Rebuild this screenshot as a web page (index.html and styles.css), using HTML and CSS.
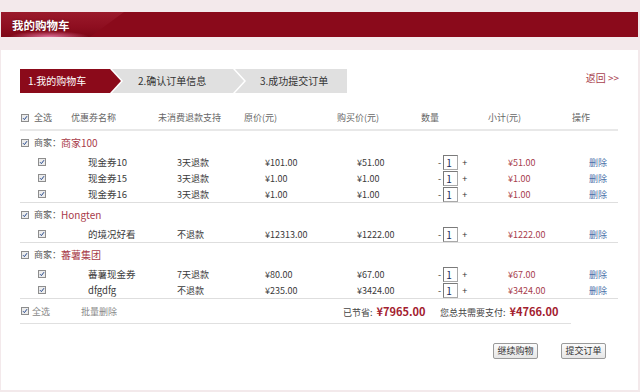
FILE: index.html
```html
<!DOCTYPE html>
<html lang="zh">
<head>
<meta charset="utf-8">
<title>我的购物车</title>
<link rel="stylesheet" href="styles.css">
</head>
<body>
<div class="topbar">
  <div class="tab"><span class="tab-title">我的购物车</span></div>
</div>
<div class="panel">
  <div class="steps-row">
    <div class="steps">
      <div class="step step1">1.我的购物车</div>
      <div class="step step2">2.确认订单信息</div>
      <div class="step step3">3.成功提交订单</div>
    </div>
    <a class="back">返回 &gt;&gt;</a>
  </div>

  <div class="cart">
    <div class="thead">
      <span class="h c-a"><i class="cb"><svg viewBox="0 0 8 8" width="8" height="8"><rect x="0.5" y="0.5" width="7" height="7" fill="#ececec" stroke="#8d8d8d"/><path d="M2 4.2 L3.4 5.6 L6 2.2" fill="none" stroke="#23468c" stroke-width="1"/></svg></i>全选</span>
      <span class="h c-b">优惠券名称</span>
      <span class="h c-c">未消费退款支持</span>
      <span class="h c-d">原价(元)</span>
      <span class="h c-e">购买价(元)</span>
      <span class="h c-f">数量</span>
      <span class="h c-g">小计(元)</span>
      <span class="h c-h">操作</span>
    </div>

    <div class="block">
      <div class="merchant"><i class="cb"><svg viewBox="0 0 8 8" width="8" height="8"><rect x="0.5" y="0.5" width="7" height="7" fill="#ececec" stroke="#8d8d8d"/><path d="M2 4.2 L3.4 5.6 L6 2.2" fill="none" stroke="#23468c" stroke-width="1"/></svg></i><span class="m-label">商家：</span><span class="m-name">商家100</span></div>
      <div class="item">
        <span class="i-a"><i class="cb"><svg viewBox="0 0 8 8" width="8" height="8"><rect x="0.5" y="0.5" width="7" height="7" fill="#ececec" stroke="#8d8d8d"/><path d="M2 4.2 L3.4 5.6 L6 2.2" fill="none" stroke="#23468c" stroke-width="1"/></svg></i></span>
        <span class="i-b">现金券10</span><span class="i-c">3天退款</span><span class="i-d">¥101.00</span><span class="i-e">¥51.00</span>
        <span class="i-f"><span class="pm">-</span><span class="qty">1</span><span class="pm">+</span></span>
        <span class="i-g">¥51.00</span><span class="i-h">删除</span>
      </div>
      <div class="item">
        <span class="i-a"><i class="cb"><svg viewBox="0 0 8 8" width="8" height="8"><rect x="0.5" y="0.5" width="7" height="7" fill="#ececec" stroke="#8d8d8d"/><path d="M2 4.2 L3.4 5.6 L6 2.2" fill="none" stroke="#23468c" stroke-width="1"/></svg></i></span>
        <span class="i-b">现金券15</span><span class="i-c">3天退款</span><span class="i-d">¥1.00</span><span class="i-e">¥1.00</span>
        <span class="i-f"><span class="pm">-</span><span class="qty">1</span><span class="pm">+</span></span>
        <span class="i-g">¥1.00</span><span class="i-h">删除</span>
      </div>
      <div class="item">
        <span class="i-a"><i class="cb"><svg viewBox="0 0 8 8" width="8" height="8"><rect x="0.5" y="0.5" width="7" height="7" fill="#ececec" stroke="#8d8d8d"/><path d="M2 4.2 L3.4 5.6 L6 2.2" fill="none" stroke="#23468c" stroke-width="1"/></svg></i></span>
        <span class="i-b">现金券16</span><span class="i-c">3天退款</span><span class="i-d">¥1.00</span><span class="i-e">¥1.00</span>
        <span class="i-f"><span class="pm">-</span><span class="qty">1</span><span class="pm">+</span></span>
        <span class="i-g">¥1.00</span><span class="i-h">删除</span>
      </div>
    </div>

    <div class="block">
      <div class="merchant"><i class="cb"><svg viewBox="0 0 8 8" width="8" height="8"><rect x="0.5" y="0.5" width="7" height="7" fill="#ececec" stroke="#8d8d8d"/><path d="M2 4.2 L3.4 5.6 L6 2.2" fill="none" stroke="#23468c" stroke-width="1"/></svg></i><span class="m-label">商家：</span><span class="m-name">Hongten</span></div>
      <div class="item">
        <span class="i-a"><i class="cb"><svg viewBox="0 0 8 8" width="8" height="8"><rect x="0.5" y="0.5" width="7" height="7" fill="#ececec" stroke="#8d8d8d"/><path d="M2 4.2 L3.4 5.6 L6 2.2" fill="none" stroke="#23468c" stroke-width="1"/></svg></i></span>
        <span class="i-b">的境况好看</span><span class="i-c">不退款</span><span class="i-d">¥12313.00</span><span class="i-e">¥1222.00</span>
        <span class="i-f"><span class="pm">-</span><span class="qty">1</span><span class="pm">+</span></span>
        <span class="i-g">¥1222.00</span><span class="i-h">删除</span>
      </div>
    </div>

    <div class="block">
      <div class="merchant"><i class="cb"><svg viewBox="0 0 8 8" width="8" height="8"><rect x="0.5" y="0.5" width="7" height="7" fill="#ececec" stroke="#8d8d8d"/><path d="M2 4.2 L3.4 5.6 L6 2.2" fill="none" stroke="#23468c" stroke-width="1"/></svg></i><span class="m-label">商家：</span><span class="m-name">蕃薯集团</span></div>
      <div class="item">
        <span class="i-a"><i class="cb"><svg viewBox="0 0 8 8" width="8" height="8"><rect x="0.5" y="0.5" width="7" height="7" fill="#ececec" stroke="#8d8d8d"/><path d="M2 4.2 L3.4 5.6 L6 2.2" fill="none" stroke="#23468c" stroke-width="1"/></svg></i></span>
        <span class="i-b">蕃薯现金券</span><span class="i-c">7天退款</span><span class="i-d">¥80.00</span><span class="i-e">¥67.00</span>
        <span class="i-f"><span class="pm">-</span><span class="qty">1</span><span class="pm">+</span></span>
        <span class="i-g">¥67.00</span><span class="i-h">删除</span>
      </div>
      <div class="item">
        <span class="i-a"><i class="cb"><svg viewBox="0 0 8 8" width="8" height="8"><rect x="0.5" y="0.5" width="7" height="7" fill="#ececec" stroke="#8d8d8d"/><path d="M2 4.2 L3.4 5.6 L6 2.2" fill="none" stroke="#23468c" stroke-width="1"/></svg></i></span>
        <span class="i-b">dfgdfg</span><span class="i-c">不退款</span><span class="i-d">¥235.00</span><span class="i-e">¥3424.00</span>
        <span class="i-f"><span class="pm">-</span><span class="qty">1</span><span class="pm">+</span></span>
        <span class="i-g">¥3424.00</span><span class="i-h">删除</span>
      </div>
    </div>

    <div class="foot">
      <span class="f-a"><i class="cb"><svg viewBox="0 0 8 8" width="8" height="8"><rect x="0.5" y="0.5" width="7" height="7" fill="#ececec" stroke="#8d8d8d"/><path d="M2 4.2 L3.4 5.6 L6 2.2" fill="none" stroke="#23468c" stroke-width="1"/></svg></i><span class="f-all">全选</span></span>
      <span class="f-b">批量删除</span>
      <span class="f-save">已节省: <b class="amt">¥7965.00</b></span>
      <span class="f-pay">您总共需要支付: <b class="amt">¥4766.00</b></span>
    </div>
  </div>

  <div class="actions">
    <button class="btn">继续购物</button>
    <button class="btn">提交订单</button>
  </div>
</div>
</body>
</html>
```

FILE: styles.css
```css
* { box-sizing: border-box; }
html, body { margin: 0; padding: 0; }
body {
  background: #f3e9eb;
  font-family: "Noto Sans CJK SC", "Noto Sans", sans-serif;
  font-size: 9px;
  color: #444;
  width: 640px;
  height: 392px;
  overflow: hidden;
}
.topbar {
  margin-top: 12px;
  margin-left: 1px;
  width: 637px;
  height: 25px;
  background: #8a0a1b;
  display: flex;
}
.tab {
  width: 123px;
  height: 25px;
  background:
    radial-gradient(ellipse 40px 6px at 48px 25px, rgba(255,150,200,0.75), rgba(255,120,170,0) 100%),
    linear-gradient(180deg, #9a1a2b 0%, #8e0e20 60%, #7e0817 100%);
  clip-path: polygon(0 0, 100% 0, 89px 100%, 0 100%);
  display: flex;
  align-items: center;
}
.tab-title {
  padding-left: 11px;
  color: #fff;
  font-weight: bold;
  font-size: 11.5px;
  text-shadow: 0 0 2px rgba(0,0,0,0.4);
}
.panel {
  margin-top: 13px;
  margin-left: 1px;
  width: 637px;
  height: 340px;
  background: #fff;
  overflow: hidden;
}
.steps-row {
  padding: 19px 19px 0 19px;
  display: flex;
  justify-content: space-between;
  align-items: flex-start;
}
.steps { display: flex; height: 24px; }
.step {
  height: 24px;
  line-height: 24px;
  font-size: 10px;
  color: #333;
  background: #e0e0e0;
}
.step1 {
  width: 101px;
  padding-left: 8px;
  background: #8b0a1a;
  color: #fff;
  clip-path: polygon(0 0, 90px 0, 100% 50%, 90px 100%, 0 100%);
}
.step2 {
  width: 132px;
  margin-left: -9px;
  padding-left: 26px;
  clip-path: polygon(0 0, 121px 0, 100% 50%, 121px 100%, 0 100%, 11px 50%);
}
.step3 {
  width: 112px;
  margin-left: -9px;
  padding-left: 25px;
  clip-path: polygon(0 0, 100% 0, 100% 100%, 0 100%, 11px 50%);
}
.back {
  margin-top: 2px;
  color: #a8404d;
  font-size: 10px;
  line-height: 14px;
}
.cart {
  margin-top: 13px;
  margin-left: 19px;
  width: 598px;
}
.cb {
  display: inline-flex;
  width: 8px;
  height: 8px;
}
.cb svg { display: block; }
.thead {
  height: 25px;
  border-bottom: 2px solid #e8e8e8;
  display: flex;
  align-items: center;
  color: #666;
}
.h { display: flex; align-items: center; }
.c-a { width: 51px; padding-left: 1px; gap: 5px; }
.c-b { width: 87px; }
.c-c { width: 86px; }
.c-d { width: 93px; }
.c-e { width: 84px; }
.c-f { width: 67px; }
.c-g { width: 84px; }
.c-h { flex: 1; }
.block { border-bottom: 1px solid #dedede; }
.merchant {
  height: 23px;
  display: flex;
  align-items: center;
  padding-left: 1px;
}
.m-label { margin-left: 5px; color: #555; }
.m-name { color: #a83a48; font-size: 10px; }
.item {
  height: 16px;
  display: flex;
  align-items: center;
  color: #3a3a3a;
}
.i-a { width: 68px; padding-left: 18px; display: flex; }
.i-b { width: 89px; font-size: 9.5px; }
.i-c { width: 88px; }
.i-d { width: 92px; }
.i-e { width: 81px; }
.i-f { width: 70px; display: flex; align-items: center; }
.pm { font-size: 9px; color: #333; }
.qty {
  width: 15px;
  height: 15px;
  margin: 0 4px 0 2px;
  border: 1px solid #a9a9a9;
  border-top-color: #7a7a7a;
  border-left-color: #7a7a7a;
  font-size: 10px;
  line-height: 13px;
  padding-left: 2px;
  color: #1a2a5a;
  background: #fff;
}
.i-g { width: 81px; color: #a8404d; }
.i-h { flex: 1; color: #4a6fa8; }
.foot {
  width: 551px;
  height: 25px;
  border-bottom: 1px solid #e0e0e0;
  display: flex;
  align-items: center;
  color: #888;
}
.f-a { width: 61px; display: flex; align-items: center; padding-left: 1px; }
.f-all { margin-left: 3px; }
.f-b { width: 262px; }
.f-save { width: 97px; color: #444; }
.f-pay { color: #444; }
.amt {
  color: #a3202e;
  font-size: 11px;
  font-weight: bold;
  margin-left: 2px;
}
.actions {
  margin-top: 19px;
  display: flex;
  justify-content: flex-end;
  padding-right: 32px;
  gap: 23px;
}
.btn {
  width: 45px;
  height: 16px;
  padding: 0;
  font-family: "Noto Sans CJK SC", sans-serif;
  font-size: 9px;
  color: #333;
  border: 1px solid #9a9a9a;
  border-radius: 2px;
  background: linear-gradient(180deg, #fbfbfb 0%, #e6e6e6 100%);
  line-height: 14px;
}
```
